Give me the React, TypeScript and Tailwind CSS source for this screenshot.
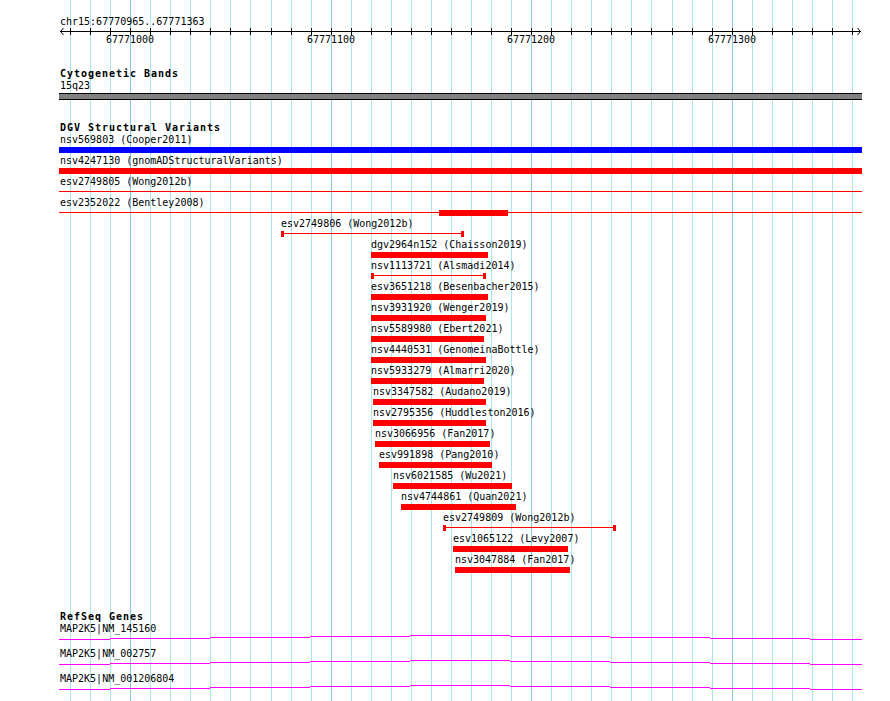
import React from "react";

const gx = (k: number) => Math.round(70 + 20.05 * k);
const MAJORS = [3, 13, 23, 33];

type Feat = {
  label: string;
  start: number;
  end: number;
  kind: "bar" | "line" | "capped" | "linethick";
  color?: string;
  thick?: [number, number];
};

const FEATS: Feat[] = [
  { label: "nsv569803 (Cooper2011)", start: 59, end: 862, kind: "bar", color: "blue" },
  { label: "nsv4247130 (gnomADStructuralVariants)", start: 59, end: 862, kind: "bar" },
  { label: "esv2749805 (Wong2012b)", start: 59, end: 862, kind: "line" },
  { label: "esv2352022 (Bentley2008)", start: 59, end: 862, kind: "linethick", thick: [439, 508] },
  { label: "esv2749806 (Wong2012b)", start: 281, end: 464, kind: "capped" },
  { label: "dgv2964n152 (Chaisson2019)", start: 371, end: 488, kind: "bar" },
  { label: "nsv1113721 (Alsmadi2014)", start: 371, end: 486, kind: "capped" },
  { label: "esv3651218 (Besenbacher2015)", start: 371, end: 488, kind: "bar" },
  { label: "nsv3931920 (Wenger2019)", start: 371, end: 486, kind: "bar" },
  { label: "nsv5589980 (Ebert2021)", start: 371, end: 484, kind: "bar" },
  { label: "nsv4440531 (GenomeinaBottle)", start: 371, end: 486, kind: "bar" },
  { label: "nsv5933279 (Almarri2020)", start: 371, end: 484, kind: "bar" },
  { label: "nsv3347582 (Audano2019)", start: 373, end: 486, kind: "bar" },
  { label: "nsv2795356 (Huddleston2016)", start: 373, end: 486, kind: "bar" },
  { label: "nsv3066956 (Fan2017)", start: 375, end: 490, kind: "bar" },
  { label: "esv991898 (Pang2010)", start: 379, end: 492, kind: "bar" },
  { label: "nsv6021585 (Wu2021)", start: 393, end: 512, kind: "bar" },
  { label: "nsv4744861 (Quan2021)", start: 401, end: 516, kind: "bar" },
  { label: "esv2749809 (Wong2012b)", start: 443, end: 616, kind: "capped" },
  { label: "esv1065122 (Levy2007)", start: 453, end: 568, kind: "bar" },
  { label: "nsv3047884 (Fan2017)", start: 455, end: 570, kind: "bar" },
];

const GENES = ["MAP2K5|NM_145160", "MAP2K5|NM_002757", "MAP2K5|NM_001206804"];

const STEPS: [number, number, number][] = [
  [59, 110, 17],
  [110, 210, 16],
  [210, 310, 15],
  [310, 410, 14],
  [410, 510, 13],
  [510, 610, 14],
  [610, 710, 15],
  [710, 810, 16],
  [810, 862, 17],
];

function Grid() {
  return (
    <div className="absolute inset-0 pointer-events-none">
      {Array.from({ length: 40 }, (_, k) => (
        <div
          key={k}
          className={`absolute top-0 bottom-0 w-px ${MAJORS.includes(k) ? "bg-[#86c8ea]" : "bg-[#a8e6ee]"}`}
          style={{ left: gx(k) }}
        />
      ))}
    </div>
  );
}

function Ruler() {
  const labels = [
    { k: 3, t: "67771000" },
    { k: 13, t: "67771100" },
    { k: 23, t: "67771200" },
    { k: 33, t: "67771300" },
  ];
  return (
    <div className="relative h-[60px]">
      <div className="absolute left-[60px] top-[15px] leading-[13px] whitespace-nowrap">
        chr15:67770965..67771363
      </div>
      <svg className="absolute left-0 top-0" width={890} height={60}>
        <line x1={60} y1={31.5} x2={861} y2={31.5} stroke="#000" strokeWidth={1} />
        {Array.from({ length: 40 }, (_, k) => (
          <line key={k} x1={gx(k) + 0.5} y1={28} x2={gx(k) + 0.5} y2={35} stroke="#000" strokeWidth={1} />
        ))}
        <polyline points="63.5,28 60.5,31.5 63.5,35" fill="none" stroke="#000" strokeWidth={1} />
        <polyline points="857.5,28 860.5,31.5 857.5,35" fill="none" stroke="#000" strokeWidth={1} />
      </svg>
      {labels.map((l) => (
        <div
          key={l.k}
          className="absolute top-[33px] leading-[13px] -translate-x-1/2 whitespace-nowrap"
          style={{ left: gx(l.k) }}
        >
          {l.t}
        </div>
      ))}
    </div>
  );
}

function Title({ children }: { children: React.ReactNode }) {
  return (
    <div className="h-[12px] pl-[60px] leading-[13px] font-bold tracking-[0.98px] whitespace-nowrap">
      {children}
    </div>
  );
}

function FeatureRow({ f }: { f: Feat }) {
  const red = "bg-[#ff0000]";
  return (
    <div className="relative h-[21px]">
      <div
        className="absolute top-0 leading-[13px] whitespace-nowrap z-10"
        style={{ left: f.start < 60 ? 60 : f.start }}
      >
        {f.label}
      </div>
      {f.kind === "bar" && (
        <div
          className={`absolute top-[14px] h-[6px] ${f.color === "blue" ? "bg-[#0000ff]" : red}`}
          style={{ left: f.start, width: f.end - f.start }}
        />
      )}
      {(f.kind === "line" || f.kind === "linethick" || f.kind === "capped") && (
        <div className={`absolute top-[16px] h-px ${red}`} style={{ left: f.start, width: f.end - f.start }} />
      )}
      {f.kind === "linethick" && f.thick && (
        <div
          className={`absolute top-[14px] h-[6px] ${red}`}
          style={{ left: f.thick[0], width: f.thick[1] - f.thick[0] }}
        />
      )}
      {f.kind === "capped" && (
        <>
          <div className={`absolute top-[14px] h-[6px] w-[3px] ${red}`} style={{ left: f.start }} />
          <div className={`absolute top-[14px] h-[6px] w-[3px] ${red}`} style={{ left: f.end - 3 }} />
        </>
      )}
    </div>
  );
}

function GeneRow({ label }: { label: string }) {
  return (
    <div className="relative h-[25px]">
      <div className="absolute left-[60px] top-0 leading-[13px] whitespace-nowrap">{label}</div>
      <svg className="absolute left-0 top-0" width={890} height={25} shapeRendering="crispEdges">
        {STEPS.map(([a, b, y], i) => (
          <rect key={i} x={a} y={y} width={b - a} height={1} fill="#ff00ff" />
        ))}
      </svg>
    </div>
  );
}

export default function App() {
  return (
    <div className="relative w-[890px] h-[701px] overflow-hidden bg-white text-black text-[10px] font-['DejaVu_Sans_Mono',monospace]">
      <Grid />
      <div className="relative flex flex-col">
        <Ruler />
        <div className="mt-[7px] flex flex-col">
          <Title>Cytogenetic Bands</Title>
          <div className="h-[13px] pl-[60px] leading-[13px]">15q23</div>
          <div className="mt-px ml-[59px] w-[803px] h-[7px] border-y border-black bg-[#808080]" />
        </div>
        <div className="mt-[21px] flex flex-col">
          <Title>DGV Structural Variants</Title>
          {FEATS.map((f, i) => (
            <FeatureRow key={i} f={f} />
          ))}
        </div>
        <div className="mt-[36px] flex flex-col">
          <Title>RefSeq Genes</Title>
          {GENES.map((g) => (
            <GeneRow key={g} label={g} />
          ))}
        </div>
      </div>
    </div>
  );
}
